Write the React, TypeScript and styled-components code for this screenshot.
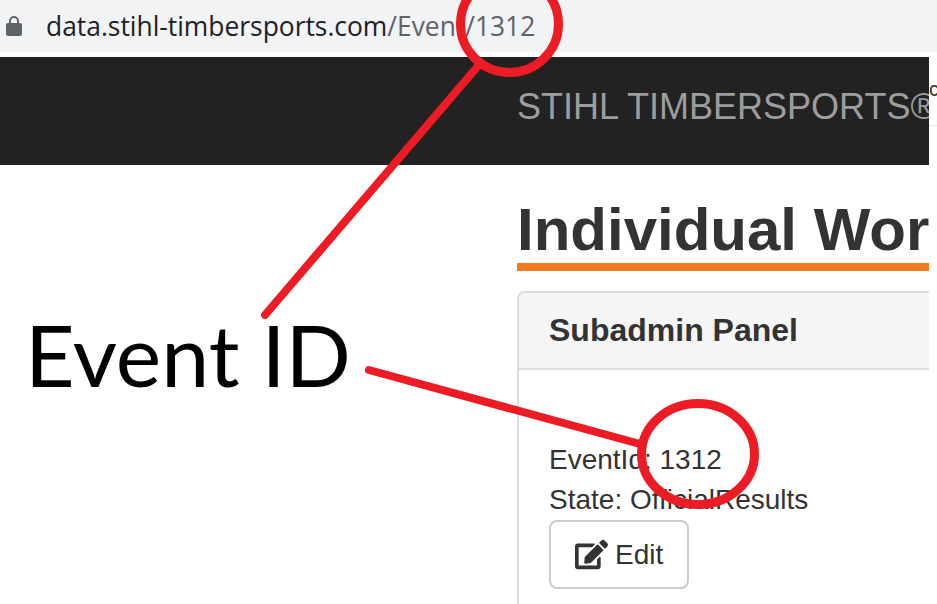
import styled, { createGlobalStyle } from "styled-components";
import { FaEdit } from "react-icons/fa";

const GlobalStyle = createGlobalStyle`
  html, body {
    margin: 0;
    padding: 0;
    background: #fff;
    overflow: hidden;
  }
`

const Page = styled.div`
  position: relative;
  width: 937px;
  height: 604px;
  overflow: hidden;
  font-family: "Liberation Sans", Arial, sans-serif;
  color: #333;
`

const AddressBar = styled.div`
  display: flex;
  align-items: center;
  height: 52px;
  padding-left: 6px;
  background: #f1f3f4;
  font-family: "Open Sans", sans-serif;
  font-size: 26.4px;
  white-space: nowrap;
`

const LockIcon = styled.svg`
  width: 16px;
  height: 20px;
  margin-right: 24px;
  fill: #5f6368;
`

const Domain = styled.span`
  color: #202124;
`

const UrlPath = styled.span`
  color: #5f6368;
`

const Navbar = styled.div`
  display: flex;
  width: 929px;
  height: 108px;
  margin-top: 5px;
  padding: 30px 0 0 517px;
  box-sizing: border-box;
  background: #222;
  overflow: hidden;
`

const Brand = styled.span`
  font-size: 36px;
  line-height: 40px;
  color: #9d9d9d;
  white-space: nowrap;
`

const NavEdge = styled.div`
  position: absolute;
  left: 929px;
  top: 77px;
  width: 8px;
  height: 49px;
  overflow: hidden;
  font-size: 20px;
  line-height: 24px;
  color: #333;
  border-bottom: 1px solid #e7e7e7;
  box-sizing: border-box;
`

const Content = styled.div`
  width: 929px;
  padding-left: 517px;
  box-sizing: border-box;
  overflow: hidden;
`

const Heading = styled.h1`
  width: 412px;
  margin: 34px 0 0;
  padding-bottom: 3px;
  border-bottom: 8px solid #f47b20;
  font-size: 60px;
  line-height: 61px;
  font-weight: 700;
  color: #333;
  white-space: nowrap;
  overflow: hidden;
`

const Panel = styled.div`
  width: 600px;
  margin-top: 20px;
  border: 2px solid #ddd;
  border-radius: 8px;
`

const PanelHeader = styled.div`
  height: 75px;
  padding: 0 30px;
  display: flex;
  align-items: center;
  background: #f5f5f5;
  border-bottom: 2px solid #ddd;
  border-radius: 6px 6px 0 0;
`

const PanelTitle = styled.span`
  font-size: 32px;
  font-weight: 700;
  color: #333;
`

const PanelBody = styled.div`
  padding: 70px 30px 30px;
  font-size: 28px;
  line-height: 40px;
`

const InfoRow = styled.div`
  white-space: nowrap;
`

const EditButton = styled.button`
  display: flex;
  align-items: center;
  gap: 7px;
  width: 140px;
  height: 69px;
  padding: 0 0 0 24px;
  background: #fff;
  border: 2px solid #ccc;
  border-radius: 8px;
  box-sizing: border-box;
  font-family: inherit;
  font-size: 28px;
  color: #333;
`

const Annotations = styled.svg`
  position: absolute;
  left: 0;
  top: 0;
  width: 937px;
  height: 604px;
  pointer-events: none;
`

const AnnotationLabel = styled.div`
  position: absolute;
  left: 25px;
  top: 304px;
  font-family: Lato, sans-serif;
  font-size: 86px;
  line-height: 100px;
  color: #000;
  white-space: nowrap;
`

const App = () => {
    return <Page>
        <GlobalStyle/>
        <AddressBar>
            <LockIcon viewBox="0 0 16 20">
                <path d="M14 7h-1V5a5 5 0 0 0-10 0v2H2a2 2 0 0 0-2 2v9a2 2 0 0 0 2 2h12a2 2 0 0 0 2-2V9a2 2 0 0 0-2-2zM5 5a3 3 0 0 1 6 0v2H5z"/>
            </LockIcon>
            <Domain>data.stihl-timbersports.com</Domain>
            <UrlPath>/Event/1312</UrlPath>
        </AddressBar>
        <Navbar>
            <Brand>STIHL TIMBERSPORTS®</Brand>
        </Navbar>
        <NavEdge>c</NavEdge>
        <Content>
            <Heading>Individual Wor</Heading>
            <Panel>
                <PanelHeader>
                    <PanelTitle>Subadmin Panel</PanelTitle>
                </PanelHeader>
                <PanelBody>
                    <InfoRow>EventId: 1312</InfoRow>
                    <InfoRow>State: OfficialResults</InfoRow>
                    <EditButton>
                        <FaEdit size={33}/>
                        Edit
                    </EditButton>
                </PanelBody>
            </Panel>
        </Content>
        <AnnotationLabel>Event ID</AnnotationLabel>
        <Annotations viewBox="0 0 937 604">
            <g fill="none" stroke="#ed1c24" strokeLinecap="round">
                <ellipse cx="509.5" cy="24" rx="49" ry="48.5" strokeWidth="9"/>
                <path d="M478 66 L265 315" strokeWidth="8"/>
                <ellipse cx="698" cy="454" rx="56.5" ry="50.5" strokeWidth="9"/>
                <path d="M369 370 L640 444" strokeWidth="8"/>
            </g>
        </Annotations>
    </Page>
}

export default App;
